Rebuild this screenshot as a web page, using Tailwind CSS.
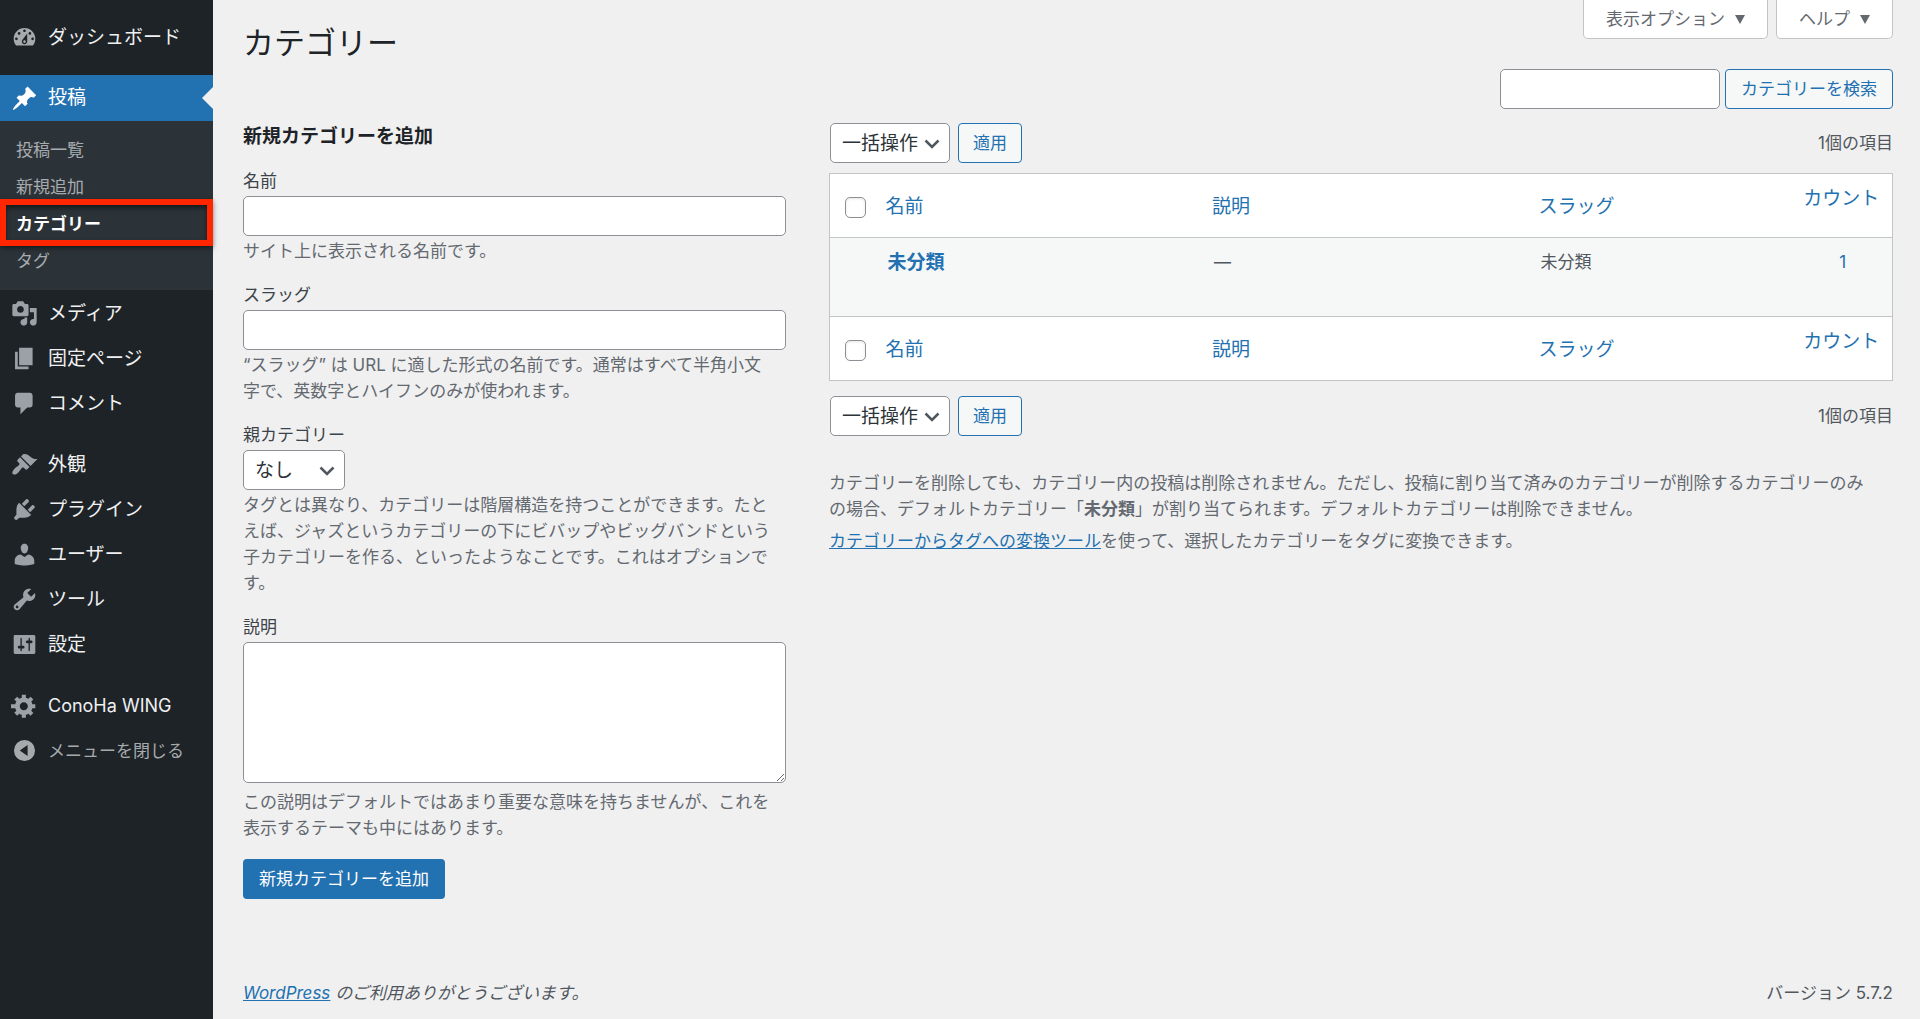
<!DOCTYPE html>
<html lang="ja">
<head>
<meta charset="utf-8">
<meta name="viewport" content="width=device-width, initial-scale=1">
<title>カテゴリー</title>
<script src="https://cdn.jsdelivr.net/npm/@tailwindcss/browser@4"></script>
</head>
<body class="flex min-h-screen bg-[#f0f0f0] font-['Inter','Noto_Sans_CJK_JP',sans-serif] text-[17px] leading-[26px] text-[#3c434a]">

<!-- Admin menu -->
<nav aria-label="メインメニュー" class="w-[213px] shrink-0 bg-[#1d2327] pt-[14px] text-[19px] text-[#f0f0f1]">
  <ul>
    <li><a href="#" class="flex h-[45px] items-center pt-[2px]"><span class="flex w-12 justify-center text-[#a7aaad]"><svg class="size-[27px]" viewBox="0 0 20 20" fill="currentColor"><path fill-rule="evenodd" d="M3.76 16h12.48c1.1-1.37 1.76-3.11 1.76-5 0-4.42-3.58-8-8-8s-8 3.58-8 8c0 1.89.66 3.63 1.76 5zM10 4c.55 0 1 .45 1 1s-.45 1-1 1-1-.45-1-1 .45-1 1-1zM6 6c.55 0 1 .45 1 1s-.45 1-1 1-1-.45-1-1 .45-1 1-1zm8 0c.55 0 1 .45 1 1s-.45 1-1 1-1-.45-1-1 .45-1 1-1zm-5.37 5.55L12 7v6c0 1.1-.9 2-2 2s-2-.9-2-2c0-.57.24-1.08.63-1.45zM4 10c.55 0 1 .45 1 1s-.45 1-1 1-1-.45-1-1 .45-1 1-1zm12 0c.55 0 1 .45 1 1s-.45 1-1 1-1-.45-1-1 .45-1 1-1zm-5 3c0-.55-.45-1-1-1s-1 .45-1 1 .45 1 1 1 1-.45 1-1z"/></svg></span>ダッシュボード</a></li>
    <li class="mt-4">
      <a href="#" class="relative flex h-[46px] items-center bg-[#2271b1] text-white"><span class="flex w-12 justify-center"><svg class="size-[27px]" viewBox="0 0 20 20" fill="currentColor"><path d="M10.44 3.02l1.82-1.82 6.36 6.35-1.83 1.82c-1.05-.68-2.48-.57-3.41.36l-.75.75c-.92.93-1.04 2.35-.35 3.41l-1.83 1.82-2.41-2.41-2.8 2.79c-.42.42-3.38 2.71-3.8 2.29s1.86-3.39 2.28-3.81l2.79-2.79L4.1 9.36l1.83-1.82c1.05.69 2.48.57 3.4-.36l.75-.75c.93-.92 1.05-2.35.36-3.41z"/></svg></span>投稿
        <svg class="absolute top-3 right-0 h-[22px] w-[11px] text-[#f0f0f0]" viewBox="0 0 11 22" fill="currentColor"><path d="M11 0v22L0 11z"/></svg>
      </a>
      <ul class="bg-[#2c3338] pt-[10px] pb-[11px] text-[17px] text-[#a7abaf]">
        <li><a href="#" class="flex h-[37px] items-center pl-4">投稿一覧</a></li>
        <li><a href="#" class="flex h-[37px] items-center pl-4">新規追加</a></li>
        <li class="relative">
          <a href="#" aria-current="page" class="flex h-[37px] items-center pl-4 font-bold text-white">カテゴリー</a>
          <span class="pointer-events-none absolute inset-x-0 -top-[6px] -bottom-[4px] border-6 border-[#ff2600] shadow-[0_2px_5px_rgba(0,0,0,.5),inset_0_3px_5px_rgba(0,0,0,.5)]"></span>
        </li>
        <li><a href="#" class="flex h-[37px] items-center pl-4">タグ</a></li>
      </ul>
    </li>
    <li><a href="#" class="flex h-[45px] items-center pt-[2px]"><span class="flex w-12 justify-center text-[#9ca1a8]"><svg class="size-[27px]" viewBox="0 0 20 20" fill="currentColor"><path fill-rule="evenodd" d="M13 11V4c0-.55-.45-1-1-1h-1.67L9 1H5L3.67 3H2c-.55 0-1 .45-1 1v7c0 .55.45 1 1 1h10c.55 0 1-.45 1-1zM7 4.5c1.38 0 2.5 1.12 2.5 2.5S8.38 9.5 7 9.5 4.5 8.38 4.5 7 5.62 4.5 7 4.5zM14 6h5v10.5c0 1.38-1.12 2.5-2.5 2.5S14 17.88 14 16.5s1.12-2.5 2.5-2.5c.17 0 .34.02.5.05V9h-3V6zm-4 8.05V13h2v3.5c0 1.38-1.12 2.5-2.5 2.5S7 17.88 7 16.5 8.12 14 9.5 14c.17 0 .34.02.5.05z"/></svg></span>メディア</a></li>
    <li><a href="#" class="flex h-[45px] items-center pt-[2px]"><span class="flex w-12 justify-center text-[#9ca1a8]"><svg class="size-[27px]" viewBox="0 0 20 20" fill="currentColor"><path d="M6 15V2h10v13H6zm-1 1h8v2H3V5h2v11z"/></svg></span>固定ページ</a></li>
    <li><a href="#" class="flex h-[45px] items-center pt-[2px]"><span class="flex w-12 justify-center text-[#9ca1a8]"><svg class="size-[27px]" viewBox="0 0 20 20" fill="currentColor"><path d="M5 2h9c1.1 0 2 .9 2 2v7c0 1.1-.9 2-2 2h-2l-5 5v-5H5c-1.1 0-2-.9-2-2V4c0-1.1.9-2 2-2z"/></svg></span>コメント</a></li>
    <li class="mt-4"><a href="#" class="flex h-[45px] items-center pt-[2px]"><span class="flex w-12 justify-center text-[#9ca1a8]"><svg class="size-[27px]" viewBox="0 0 20 20" fill="currentColor"><path d="M14.48 11.06L7.41 3.99l1.5-1.5c.5-.56 2.3-.47 3.51.32 1.21.8 1.43 1.28 2.91 2.1 1.18.64 2.45 1.26 4.45.85zm-.71.71L6.7 4.7 4.93 6.47c-.39.39-.39 1.02 0 1.41l1.06 1.06c.39.39.39 1.03 0 1.42-.6.6-1.43 1.11-2.21 1.69-.35.26-.7.53-1.01.84C1.43 14.23.4 16.08 1.4 17.07c.99 1 2.84-.03 4.18-1.36.31-.31.58-.66.85-1.02.57-.78 1.08-1.61 1.69-2.21.39-.39 1.02-.39 1.41 0l1.06 1.06c.39.39 1.02.39 1.41 0z"/></svg></span>外観</a></li>
    <li><a href="#" class="flex h-[45px] items-center pt-[2px]"><span class="flex w-12 justify-center text-[#9ca1a8]"><svg class="size-[27px]" viewBox="0 0 20 20" fill="currentColor"><path d="M13.11 4.36L9.87 7.6 8 5.73l3.24-3.24c.35-.34 1.05-.2 1.56.32.52.51.66 1.21.31 1.55zm-8 1.77l.91-1.12 9.01 9.01-1.19.84c-.71.71-2.63 1.16-3.82 1.16H6.14L4.9 17.26c-.59.59-1.54.59-2.12 0-.59-.58-.59-1.53 0-2.12l1.24-1.24v-3.88c0-1.13.4-3.19 1.09-3.89zm7.26 3.97l3.24-3.24c.34-.35 1.04-.21 1.55.31.52.51.66 1.21.31 1.55l-3.24 3.25z"/></svg></span>プラグイン</a></li>
    <li><a href="#" class="flex h-[45px] items-center pt-[2px]"><span class="flex w-12 justify-center text-[#9ca1a8]"><svg class="size-[27px]" viewBox="0 0 20 20" fill="currentColor"><path d="M10 9.25c-2.27 0-2.73-3.44-2.73-3.44C7 4.02 7.82 2 9.97 2c2.16 0 2.98 2.02 2.71 3.81 0 0-.41 3.44-2.68 3.44zm0 2.57L12.72 10c2.39 0 4.52 2.33 4.52 4.53v2.49s-3.65 1.13-7.24 1.13c-3.65 0-7.24-1.13-7.24-1.13v-2.49c0-2.25 1.94-4.48 4.47-4.48z"/></svg></span>ユーザー</a></li>
    <li><a href="#" class="flex h-[45px] items-center pt-[2px]"><span class="flex w-12 justify-center text-[#9ca1a8]"><svg class="size-[27px]" viewBox="0 0 20 20" fill="currentColor"><path fill-rule="evenodd" d="M16.68 9.77c-1.34 1.34-3.3 1.67-4.95.99l-5.41 6.52c-.99.99-2.59.99-3.58 0s-.99-2.59 0-3.57l6.52-5.42c-.68-1.65-.35-3.61.99-4.95 1.28-1.28 3.12-1.62 4.72-1.06l-2.89 2.89 2.82 2.82 2.86-2.87c.53 1.58.18 3.39-1.08 4.65zM3.81 16.21c.4.39 1.04.39 1.43 0 .4-.4.4-1.04 0-1.43-.39-.4-1.03-.4-1.43 0-.39.39-.39 1.03 0 1.43z"/></svg></span>ツール</a></li>
    <li><a href="#" class="flex h-[45px] items-center pt-[2px]"><span class="flex w-12 justify-center text-[#9ca1a8]"><svg class="size-[27px]" viewBox="0 0 20 20" fill="currentColor"><path fill-rule="evenodd" d="M18 16V4c0-.55-.45-1-1-1H3c-.55 0-1 .45-1 1v12c0 .55.45 1 1 1h14c.55 0 1-.45 1-1zM8 11h1c.55 0 1 .45 1 1s-.45 1-1 1H8v1.5c0 .28-.22.5-.5.5s-.5-.22-.5-.5V13H6c-.55 0-1-.45-1-1s.45-1 1-1h1V5.5c0-.28.22-.5.5-.5s.5.22.5.5V11zm5-2h-1c-.55 0-1-.45-1-1s.45-1 1-1h1V5.5c0-.28.22-.5.5-.5s.5.22.5.5V7h1c.55 0 1 .45 1 1s-.45 1-1 1h-1v5.5c0 .28-.22.5-.5.5s-.5-.22-.5-.5V9z"/></svg></span>設定</a></li>
    <li class="mt-4"><a href="#" class="flex h-[45px] items-center pt-[2px] text-[18px]"><span class="flex w-12 justify-center text-[#9ca1a8]"><svg class="size-[27px]" viewBox="0 0 20 20" fill="currentColor"><path fill-rule="evenodd" d="M18 12h-2.18c-.17.7-.44 1.35-.81 1.93l1.54 1.54-2.1 2.1-1.54-1.54c-.58.36-1.23.63-1.91.79V19H8v-2.18c-.68-.16-1.33-.43-1.91-.79l-1.54 1.54-2.12-2.12 1.54-1.54c-.36-.58-.63-1.23-.79-1.91H0V9.03h3.17c.16-.7.44-1.35.8-1.94L2.43 5.55l2.1-2.1 1.54 1.54c.58-.37 1.24-.64 1.93-.81V2h3v2.18c.68.16 1.33.43 1.91.79l1.54-1.54 2.12 2.12-1.54 1.54c.36.59.64 1.24.8 1.94H18V12zm-8.5 1.5c1.66 0 3-1.34 3-3s-1.34-3-3-3-3 1.34-3 3 1.34 3 3 3z"/></svg></span>ConoHa WING</a></li>
    <li><button type="button" class="flex h-[45px] w-full items-center pt-[2px] text-[17px] text-[#a7aaad]"><span class="flex w-12 justify-center"><svg class="size-[27px]" viewBox="0 0 20 20" fill="currentColor"><path fill-rule="evenodd" d="M10 2.200a7.800 7.800 0 1 0 0 15.600a7.800 7.800 0 1 0 0-15.600zM12.300 6v8L6.500 10z"/></svg></span>メニューを閉じる</button></li>
  </ul>
</nav>

<div class="flex min-w-0 flex-1 flex-col pr-[27px] pl-[30px]">
  <header class="flex items-start justify-between">
    <h1 class="pt-[22px] text-[31px] leading-[41px] text-[#1d2327]">カテゴリー</h1>
    <div class="flex gap-2 text-[#646970]">
      <button type="button" class="flex h-[39px] items-center gap-[10px] rounded-b-[5px] border border-t-0 border-[#c3c4c7] bg-white px-[22px]">表示オプション<svg class="h-[9px] w-[10px]" viewBox="0 0 10 9" fill="currentColor"><path d="M0 0h10L5 9z"/></svg></button>
      <button type="button" class="flex h-[39px] items-center gap-[10px] rounded-b-[5px] border border-t-0 border-[#c3c4c7] bg-white px-[22px]">ヘルプ<svg class="h-[9px] w-[10px]" viewBox="0 0 10 9" fill="currentColor"><path d="M0 0h10L5 9z"/></svg></button>
    </div>
  </header>

  <form role="search" class="mt-[6px] flex justify-end gap-[5px]">
    <input type="search" aria-label="カテゴリーを検索" class="h-10 w-[220px] rounded-[5px] border border-[#8c8f94] bg-white px-2">
    <button type="button" class="h-10 rounded-[4px] border border-[#2271b1] bg-[#f6f7f7] px-[15px] text-[#2271b1]">カテゴリーを検索</button>
  </form>

  <main class="mt-[14px] grid grid-cols-[543fr_1064fr] gap-[43px]">
    <form class="flex flex-col items-start gap-[18px]">
      <h2 class="pt-px text-[19px] font-bold text-[#1d2327]">新規カテゴリーを追加</h2>
      <div class="w-full">
        <label for="tag-name" class="block">名前</label>
        <input id="tag-name" type="text" class="mt-[2px] block h-10 w-full rounded-[5px] border border-[#8c8f94] bg-white px-2">
        <p class="mt-[2px] pr-3 text-[#646970]">サイト上に表示される名前です。</p>
      </div>
      <div class="w-full">
        <label for="tag-slug" class="block">スラッグ</label>
        <input id="tag-slug" type="text" class="mt-[2px] block h-10 w-full rounded-[5px] border border-[#8c8f94] bg-white px-2">
        <p class="mt-[2px] pr-3 text-[#646970]">“スラッグ” は URL に適した形式の名前です。通常はすべて半角小文字で、英数字とハイフンのみが使われます。</p>
      </div>
      <div class="w-full">
        <label for="parent" class="block">親カテゴリー</label>
        <div class="relative mt-[2px] w-[102px]">
          <select id="parent" class="block h-10 w-full appearance-none rounded-[5px] border border-[#8c8f94] bg-white pt-[2px] pl-[11px] text-[19px] text-[#2c3338]"><option>なし</option></select>
          <svg class="pointer-events-none absolute top-[16px] right-[10px] h-[10px] w-4" viewBox="0 0 16 10" fill="none" stroke="#50575e" stroke-width="2.500"><path d="M1.500 1.500L8 8l6.500-6.500"/></svg>
        </div>
        <p class="mt-[2px] pr-3 text-[#646970]">タグとは異なり、カテゴリーは階層構造を持つことができます。たとえば、ジャズというカテゴリーの下にビバップやビッグバンドという子カテゴリーを作る、といったようなことです。これはオプションです。</p>
      </div>
      <div class="w-full">
        <label for="tag-description" class="block">説明</label>
        <textarea id="tag-description" class="mt-[2px] block h-[141px] w-full resize rounded-[5px] border border-[#8c8f94] bg-white px-2"></textarea>
        <p class="mt-[6px] pr-3 text-[#646970]">この説明はデフォルトではあまり重要な意味を持ちませんが、これを表示するテーマも中にはあります。</p>
      </div>
      <button type="button" class="h-10 rounded-[4px] bg-[#2271b1] px-4 text-white">新規カテゴリーを追加</button>
    </form>

    <section aria-label="カテゴリー一覧">
      <div class="flex items-center gap-2 pl-px">
        <div class="relative w-[120px]">
          <select aria-label="一括操作を選択" class="block h-10 w-full appearance-none rounded-[5px] border border-[#8c8f94] bg-white pt-[2px] pl-[11px] text-[19px] text-[#2c3338]"><option>一括操作</option></select>
          <svg class="pointer-events-none absolute top-[16px] right-[10px] h-[10px] w-4" viewBox="0 0 16 10" fill="none" stroke="#50575e" stroke-width="2.500"><path d="M1.500 1.500L8 8l6.500-6.500"/></svg>
        </div>
        <button type="button" class="h-10 rounded-[4px] border border-[#2271b1] bg-[#f6f7f7] px-[14px] text-[#2271b1]">適用</button>
        <span class="ml-auto text-[#50575e]">1個の項目</span>
      </div>

      <table class="mt-[10px] w-full table-fixed border-collapse border border-[#c3c4c7] bg-white">
        <colgroup><col class="w-[46px]"><col><col><col class="w-[265px]"><col class="w-[99px]"></colgroup>
        <thead class="text-[19px] text-[#2271b1]">
          <tr class="h-16">
            <td class="pl-[15px]"><input type="checkbox" aria-label="すべて選択" class="mt-1 block size-[21px] appearance-none rounded-[5px] border border-[#8c8f94] bg-white shadow-[inset_0_1px_3px_rgba(0,0,0,.1)]"></td>
            <th class="pt-[2px] pl-[10px] text-left font-normal"><a href="#">名前</a></th>
            <th class="pt-[2px] pl-[10px] text-left font-normal"><a href="#">説明</a></th>
            <th class="pt-[2px] pl-[10px] text-left font-normal"><a href="#">スラッグ</a></th>
            <th class="pt-3 pr-[3px] text-center align-top font-normal"><a href="#">カウント</a></th>
          </tr>
        </thead>
        <tbody>
          <tr class="h-[79px] border-y border-[#c3c4c7] bg-[#f6f7f7] align-top text-[#50575e]">
            <td></td>
            <td class="pt-3 pl-3 text-[19px] font-bold text-[#2271b1]"><a href="#">未分類</a></td>
            <td class="pt-[11px] pl-3">—</td>
            <td class="pt-[11px] pl-3">未分類</td>
            <td class="pt-[11px] text-center text-[#2271b1]"><a href="#">1</a></td>
          </tr>
        </tbody>
        <tfoot class="text-[19px] text-[#2271b1]">
          <tr class="h-16">
            <td class="pl-[15px]"><input type="checkbox" aria-label="すべて選択" class="mt-1 block size-[21px] appearance-none rounded-[5px] border border-[#8c8f94] bg-white shadow-[inset_0_1px_3px_rgba(0,0,0,.1)]"></td>
            <th class="pt-[2px] pl-[10px] text-left font-normal"><a href="#">名前</a></th>
            <th class="pt-[2px] pl-[10px] text-left font-normal"><a href="#">説明</a></th>
            <th class="pt-[2px] pl-[10px] text-left font-normal"><a href="#">スラッグ</a></th>
            <th class="pt-3 pr-[3px] text-center align-top font-normal"><a href="#">カウント</a></th>
          </tr>
        </tfoot>
      </table>

      <div class="mt-[15px] flex items-center gap-2 pl-px">
        <div class="relative w-[120px]">
          <select aria-label="一括操作を選択" class="block h-10 w-full appearance-none rounded-[5px] border border-[#8c8f94] bg-white pt-[2px] pl-[11px] text-[19px] text-[#2c3338]"><option>一括操作</option></select>
          <svg class="pointer-events-none absolute top-[16px] right-[10px] h-[10px] w-4" viewBox="0 0 16 10" fill="none" stroke="#50575e" stroke-width="2.500"><path d="M1.500 1.500L8 8l6.500-6.500"/></svg>
        </div>
        <button type="button" class="h-10 rounded-[4px] border border-[#2271b1] bg-[#f6f7f7] px-[14px] text-[#2271b1]">適用</button>
        <span class="ml-auto text-[#50575e]">1個の項目</span>
      </div>

      <div class="mt-[34px] flex flex-col gap-[6px] pr-4 text-[#646970]">
        <p>カテゴリーを削除しても、カテゴリー内の投稿は削除されません。ただし、投稿に割り当て済みのカテゴリーが削除するカテゴリーのみの場合、デフォルトカテゴリー「<strong>未分類</strong>」が割り当てられます。デフォルトカテゴリーは削除できません。</p>
        <p><a href="#" class="text-[#2271b1] underline">カテゴリーからタグへの変換ツール</a>を使って、選択したカテゴリーをタグに変換できます。</p>
      </div>
    </section>
  </main>

  <footer class="mt-auto flex justify-between pt-10 pb-[13px] text-[#50575e]">
    <p class="italic"><a href="#" class="text-[#2271b1] underline">WordPress</a> のご利用ありがとうございます。</p>
    <p>バージョン 5.7.2</p>
  </footer>
</div>
</body>
</html>
